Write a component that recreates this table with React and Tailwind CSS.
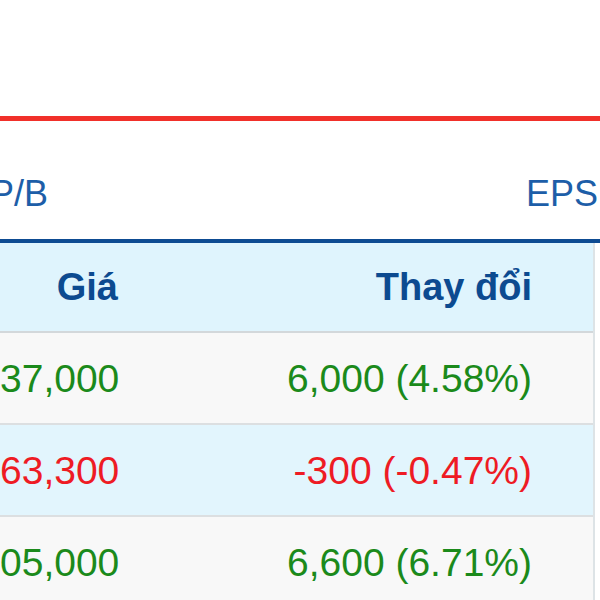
import React from "react";

const rows = [
  { price: "37,000", change: "6,000 (4.58%)", up: true, bg: "bg-[#f8f8f8]" },
  { price: "63,300", change: "-300 (-0.47%)", up: false, bg: "bg-[#e2f5fd]" },
  { price: "05,000", change: "6,600 (6.71%)", up: true, bg: "bg-[#f8f8f8]" },
];

const App = () => {
  return (
    <div className="w-[600px] h-[600px] overflow-hidden bg-white font-['Liberation_Sans',Arial,sans-serif]">
      <div className="h-[116px]" />
      <div className="h-[5px] bg-[#f1302a]" />
      {/* tabs */}
      <div className="h-[118px] flex items-center justify-between pt-[27px] text-[36px] text-[#1d5ea8] leading-none">
        <span className="ml-[-10px]">P/B</span>
        <span className="mr-[2px]">EPS</span>
      </div>
      <div className="h-[4px] bg-[#0d4b92]" />
      <div className="w-[595px] border-r-[2px] border-[#dde3e6]">
        <div className="h-[90px] flex items-center bg-[#dff4fd] border-b-[2px] border-[#d3d8db] text-[38px] font-bold text-[#0c4a90]">
          <div className="w-[118px] text-right">Giá</div>
          <div className="w-[414px] text-right">Thay đổi</div>
        </div>
        {rows.map((row, i) => (
          <div
            key={i}
            className={`h-[92px] flex items-center pt-[3px] border-b-[2px] border-[#dcdfe1] text-[39px] ${row.bg} ${
              row.up ? "text-[#1b8a1b]" : "text-[#ee1b24]"
            }`}
          >
            <div className="w-[118px] text-right whitespace-nowrap">{row.price}</div>
            <div className="w-[414px] text-right whitespace-nowrap">{row.change}</div>
          </div>
        ))}
      </div>
    </div>
  );
};

export default App;
